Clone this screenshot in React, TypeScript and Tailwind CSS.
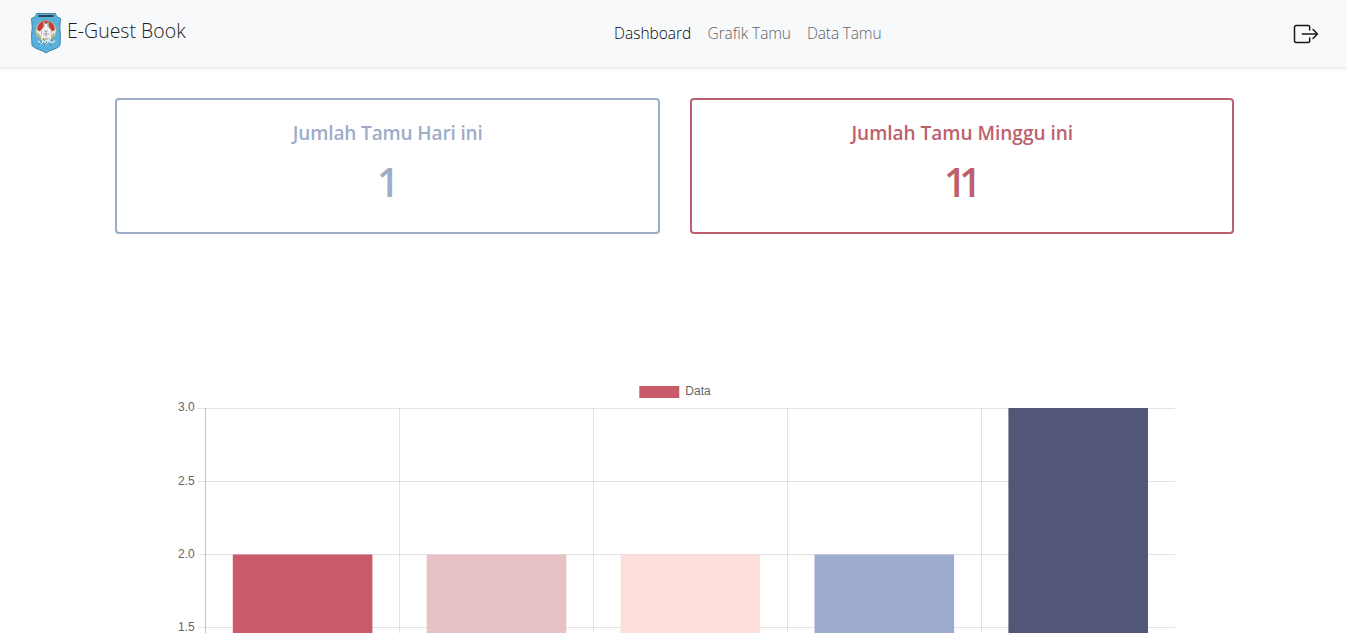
import React from "react";

const links = [
  { label: "Dashboard", style: "w-[77.5px] text-[#08090a]" },
  { label: "Grafik Tamu", style: "w-[83.5px] text-[#606264] tracking-[-0.08px]" },
  { label: "Data Tamu", style: "w-[75px] text-[#606264] tracking-[-0.15px]" },
];

const bars = [
  { value: 2, color: "#c95a6a" },
  { value: 2, color: "#e7c1c6" },
  { value: 2, color: "#fde0dc" },
  { value: 2, color: "#9dacce" },
  { value: 3, color: "#535777" },
];

const ticks = [3, 2.5, 2, 1.5];
const UNIT = 146;
const TOP = 28.5;

function Crest() {
  return (
    <svg width="32" height="42" viewBox="0 0 32 42" className="block shrink-0">
      <path
        d="M6.500 1.500h19l1 3 4 2-.7 9 .7 8-.5 10c-3 4-10 4-14 7.500-4-3.500-11-3.500-14-7.500l-.5-10 .7-8-.7-9 4-2z"
        fill="#58b1dc"
        stroke="#397c9f"
        strokeWidth=".9"
      />
      <path d="M8.500 4h15" stroke="#25383f" strokeWidth="1.800" strokeDasharray="2.400 .3" />
      <circle cx="16" cy="18.500" r="10.500" fill="#d5dfc0" stroke="#74a08b" strokeWidth=".7" />
      <circle cx="16" cy="18" r="9" fill="#f3eeea" />
      <path d="M7 17.500a9 9 0 0 1 18 0l-2.500 2-3-3-3.500-4-3.500 4-3 3z" fill="#c23a38" />
      <path d="M13.500 9.500h1v2h3v-2h1l.6 6 2 2v5l2 4H9l2.500-4v-5l1.700-2z" fill="#f1f1f1" stroke="#8c8587" strokeWidth=".5" />
      <path d="M14 12v3m4-3v3m-4 4h4m-5 3h6m-3-3v6" stroke="#736e75" strokeWidth=".6" />
      <path d="M8 21c1 5 4 7 8 7s7-2 8-7" fill="none" stroke="#b3a45c" strokeWidth="1.300" />
      <path d="M8 29l3 2.500 3-3 2 3 3-3 3 3 3-3M11 26l3 3 4-1 3-2" fill="none" stroke="#dce8ea" strokeWidth="1.500" />
      <path d="M9 32l3-2m2 3 3-3m3 3 3-2m-10-4 2 2" stroke="#526873" strokeWidth=".8" />
    </svg>
  );
}

function Navbar() {
  return (
    <header className="flex h-[67px] shrink-0 items-start bg-[#f8f9fb] pl-[30px] pr-[28px] pt-3 shadow-[0_1px_4px_rgba(0,0,0,0.13)]">
      <div className="flex w-[584px] items-start gap-[5px]">
        <Crest />
        <span className="mt-1 whitespace-nowrap text-[19.5px] font-light leading-[30px] text-[#1c1e22]">E-Guest Book</span>
      </div>
      <nav className="mt-[9px] flex gap-4 text-[15.5px] font-light leading-6">
        {links.map((link) => (
          <a key={link.label} className={`block whitespace-nowrap ${link.style}`}>
            {link.label}
          </a>
        ))}
      </nav>
      <svg width="26" height="20" viewBox="0 0 26 20" fill="none" stroke="#18191b" strokeWidth="1.500" strokeLinecap="round" strokeLinejoin="round" className="ml-auto mt-3 block">
        <path d="M16.700 6V3a1.500 1.500 0 0 0-1.500-1.500H3A1.500 1.500 0 0 0 1.500 3v14A1.500 1.500 0 0 0 3 18.500h12.200a1.500 1.500 0 0 0 1.500-1.500v-3M9.300 10h15.200M20 5.500l4.500 4.500-4.500 4.500" />
      </svg>
    </header>
  );
}

function StatCard({ title, value, style }: { title: string; value: number; style: string }) {
  return (
    <section className={`h-[136px] flex-1 rounded-[4px] border-2 pt-[21px] text-center font-semibold ${style}`}>
      <h2 className="pl-px text-[19px] leading-6">{title}</h2>
      <p className="mt-[13px] pr-[5px] text-[39px] leading-[48px] tracking-[-7px]">{value}</p>
    </section>
  );
}

function Chart() {
  return (
    <svg width="1020" height="255" viewBox="0 0 1020 255" className="block shrink-0" fontFamily="'Liberation Sans', Arial, sans-serif" fontSize="12" fill="#666">
      <rect x="474.300" y="6" width="40" height="12" fill="#c95a6a" />
      <text x="520.300" y="15">Data</text>
      {ticks.map((tick) => {
        const y = TOP + (3 - tick) * UNIT;
        return (
          <g key={tick}>
            <path d={`M33 ${y}H1010`} stroke="#000" strokeOpacity=".11" />
            <text x="29.800" y={tick === 3 ? 31 : y + 3.500} textAnchor="end">{tick.toFixed(1)}</text>
          </g>
        );
      })}
      {bars.map((bar, index) => (
        <g key={index}>
          <path
            d={`M${40.5 + index * 194} 28V467`}
            stroke="#000"
            strokeOpacity={index === 0 ? 0.24 : 0.11}
          />
          <rect x={67.800 + index * 193.900} y={28 + (3 - bar.value) * UNIT + (bar.value === 3 ? 0 : 0.5)} width="139.600" height={bar.value * UNIT} fill={bar.color} />
        </g>
      ))}
    </svg>
  );
}

export default function App() {
  return (
    <div className="flex h-screen min-h-[633px] flex-col overflow-hidden bg-white font-['Open_Sans','Noto_Sans',sans-serif]">
      <Navbar />
      <main className="flex flex-col">
        <div className="ml-[115px] mt-[31px] flex w-[1119px] gap-[30px]">
          <StatCard title="Jumlah Tamu Hari ini" value={1} style="border-[#9dacc6] text-[#9dacc8] tracking-[-0.13px]" />
          <StatCard title="Jumlah Tamu Minggu ini" value={11} style="border-[#bb6070] text-[#bd606c]" />
        </div>
        <div className="ml-[165px] mt-[146px]">
          <Chart />
        </div>
      </main>
    </div>
  );
}
